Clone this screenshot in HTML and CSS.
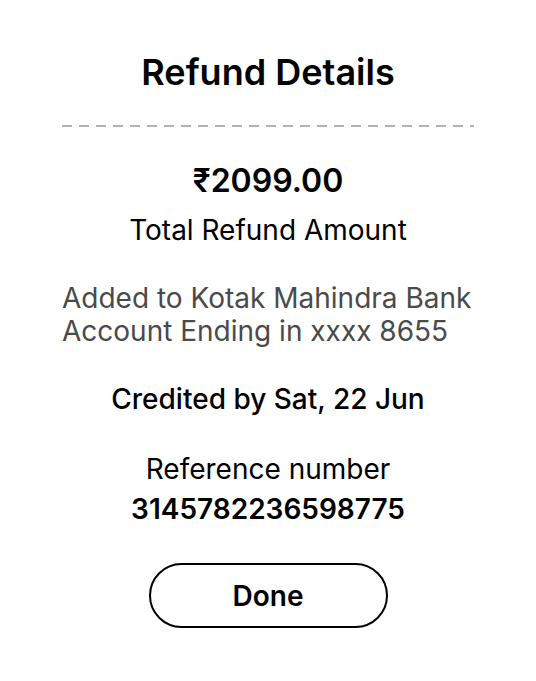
FILE: index.html
```html
<!DOCTYPE html>
<html>
<head>
<meta charset="utf-8">
<link rel="stylesheet" href="styles.css">
</head>
<body>
<div class="sheet">
  <h1 class="title">Refund Details</h1>
  <div class="divider"></div>
  <div class="amount">₹2099.00</div>
  <div class="amount-label">Total Refund Amount</div>
  <p class="account">Added to Kotak Mahindra Bank Account Ending in xxxx 8655</p>
  <div class="credited">Credited by Sat, 22 Jun</div>
  <div class="ref-label">Reference number</div>
  <div class="ref-num">3145782236598775</div>
  <button class="done">Done</button>
</div>
</body>
</html>
```
FILE: styles.css
```css
* { box-sizing: border-box; }
html, body { margin: 0; padding: 0; background: #fff; }
body { font-family: Inter, "Noto Sans", sans-serif; color: #000; }
.sheet {
  width: 536px;
  padding: 52px 62px 0;
  display: flex;
  flex-direction: column;
  align-items: center;
}
.title {
  margin: 0;
  font-size: 36px;
  font-weight: 600;
  line-height: 40px;
}
.divider {
  align-self: stretch;
  margin-top: 33px;
  height: 2px;
  background-image: repeating-linear-gradient(to right, #b0b0b0 0 10px, transparent 10px 17px);
}
.amount {
  margin-top: 36px;
  font-size: 32px;
  font-weight: 600;
  line-height: 36px;
}
.amount-label {
  margin-top: 15px;
  font-size: 28px;
  line-height: 32px;
}
.account {
  align-self: stretch;
  margin: 36px 0 0;
  font-size: 28px;
  line-height: 33px;
  color: #4a4a4a;
}
.credited {
  margin-top: 35px;
  font-size: 28px;
  font-weight: 500;
  line-height: 32px;
}
.ref-label {
  margin-top: 38px;
  font-size: 28px;
  line-height: 32px;
}
.ref-num {
  margin-top: 8px;
  font-size: 28px;
  font-weight: 600;
  line-height: 32px;
}
.done {
  margin-top: 38px;
  width: 239px;
  height: 65px;
  border: 2px solid #000;
  border-radius: 33px;
  background: #fff;
  font-family: inherit;
  font-size: 28px;
  font-weight: 600;
  color: #000;
}
```
